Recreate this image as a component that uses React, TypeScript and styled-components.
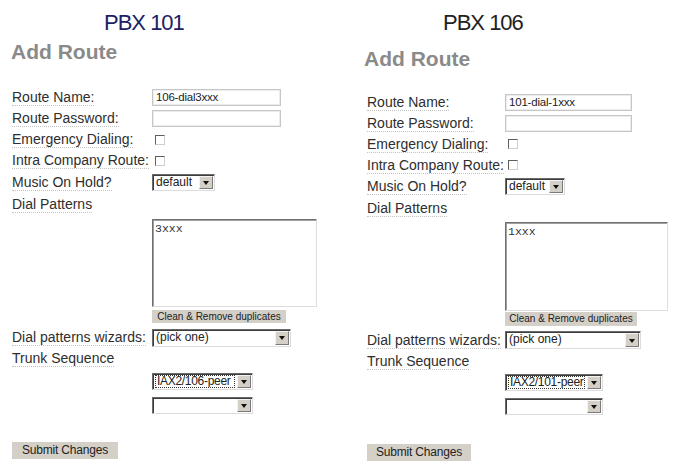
import React from 'react';
import styled, { createGlobalStyle } from 'styled-components';

const GlobalStyle = createGlobalStyle`
  html, body {
    margin: 0;
    padding: 0;
    background: #ffffff;
  }
  body {
    font-family: "Liberation Sans", Arial, sans-serif;
    color: #2a2a2a;
  }
`;

type PanelData = {
  title: string;
  titleColor: string;
  titleIndent: number;
  headIndent: number;
  headMargin: number;
  formMargin: number;
  labelWidth: number;
  routeName: string;
  pattern: string;
  trunk: string;
  inputWidth: number;
  musicWidth: number;
  areaWidth: number;
  areaHeight: number;
  areaGap: number;
  cleanWidth: number;
  cleanGap: number;
  cleanHeight: number;
  wizardWidth: number;
  wizardGap: number;
  trunkWidth: number;
  trunkGap: number;
  submitWidth: number;
  submitGap: number;
  width: number;
};

const panels: PanelData[] = [
  {
    title: 'PBX 101',
    titleColor: '#1c2163',
    titleIndent: 92,
    headIndent: -1,
    headMargin: 4,
    formMargin: 23,
    labelWidth: 140,
    routeName: '106-dial3xxx',
    pattern: '3xxx',
    trunk: 'IAX2/106-peer',
    inputWidth: 129,
    musicWidth: 63,
    areaWidth: 165,
    areaHeight: 88,
    areaGap: 3.5,
    cleanWidth: 134,
    cleanGap: 3,
    cleanHeight: 13,
    wizardWidth: 139,
    wizardGap: 4,
    trunkWidth: 101,
    trunkGap: 4,
    submitWidth: 106,
    submitGap: 28,
    width: 355,
  },
  {
    title: 'PBX 106',
    titleColor: '#222222',
    titleIndent: 76,
    headIndent: -3,
    headMargin: 10.5,
    formMargin: 21,
    labelWidth: 138,
    routeName: '101-dial-1xxx',
    pattern: '1xxx',
    trunk: 'IAX2/101-peer',
    inputWidth: 127,
    musicWidth: 60,
    areaWidth: 163,
    areaHeight: 89,
    areaGap: 2.5,
    cleanWidth: 132,
    cleanGap: 1,
    cleanHeight: 14,
    wizardWidth: 136,
    wizardGap: 3,
    trunkWidth: 98,
    trunkGap: 3,
    submitWidth: 104,
    submitGap: 29,
    width: 320,
  },
];

function App() {
  return (
    <>
      <GlobalStyle />
      <Page>
        {panels.map((p) => (
          <RoutePanel key={p.title} data={p} />
        ))}
      </Page>
    </>
  );
}

function RoutePanel({ data }: { data: PanelData }) {
  return (
    <Panel $width={data.width}>
      <Title $color={data.titleColor} $indent={data.titleIndent}>
        {data.title}
      </Title>
      <Heading $indent={data.headIndent} $gap={data.headMargin}>
        Add Route
      </Heading>

      <Form $gap={data.formMargin}>
        <Row $label={data.labelWidth}>
          <Label>Route Name:</Label>
          <TextBox $width={data.inputWidth}>{data.routeName}</TextBox>
        </Row>
        <Row $label={data.labelWidth}>
          <Label>Route Password:</Label>
          <TextBox $width={data.inputWidth} />
        </Row>
        <Row $label={data.labelWidth}>
          <Label>Emergency Dialing:</Label>
          <Check />
        </Row>
        <Row $label={data.labelWidth}>
          <Label>Intra Company Route:</Label>
          <Check />
        </Row>
        <Row $label={data.labelWidth} $height={22}>
          <Label>Music On Hold?</Label>
          <Select width={data.musicWidth} value="default" />
        </Row>
        <Row $label={data.labelWidth} $height={22}>
          <Label>Dial Patterns</Label>
          <span />
        </Row>

        <Indent $label={data.labelWidth} $gap={data.areaGap}>
          <PatternArea $width={data.areaWidth} $height={data.areaHeight}>
            {data.pattern}
          </PatternArea>
        </Indent>
        <Indent $label={data.labelWidth} $gap={data.cleanGap}>
          <SmallButton $width={data.cleanWidth} $height={data.cleanHeight}>
            Clean &amp; Remove duplicates
          </SmallButton>
        </Indent>

        <Row $label={data.labelWidth} $height={22} $gap={data.wizardGap}>
          <Label>Dial patterns wizards:</Label>
          <Select width={data.wizardWidth} height={18} value="(pick one)" />
        </Row>
        <Row $label={data.labelWidth} $height={20}>
          <Label>Trunk Sequence</Label>
          <span />
        </Row>

        <Indent $label={data.labelWidth} $gap={data.trunkGap}>
          <Select width={data.trunkWidth} value={data.trunk} focused />
        </Indent>
        <Indent $label={data.labelWidth} $gap={7}>
          <Select width={data.trunkWidth} value="" />
        </Indent>

        <SubmitButton $width={data.submitWidth} $gap={data.submitGap}>
          Submit Changes
        </SubmitButton>
      </Form>
    </Panel>
  );
}

function Select({
  width,
  height = 17,
  value,
  focused,
}: {
  width: number;
  height?: number;
  value: string;
  focused?: boolean;
}) {
  return (
    <SelectBox $width={width} $height={height}>
      <SelectValue $focused={!!focused}>{value}</SelectValue>
      <ArrowButton>
        <Arrow />
      </ArrowButton>
    </SelectBox>
  );
}

export default App;

const Page = styled.div`
  display: flex;
  width: 675px;
  height: 473px;
  overflow: hidden;
`;

const Panel = styled.div<{ $width: number }>`
  width: ${(p) => p.$width}px;
  flex: none;
  padding: 10px 0 0 12px;
  box-sizing: border-box;
  display: flex;
  flex-direction: column;
  align-items: flex-start;
`;

const Title = styled.div<{ $color: string; $indent: number }>`
  padding-left: ${(p) => p.$indent}px;
  font-size: 22px;
  line-height: 26px;
  letter-spacing: -1px;
  color: ${(p) => p.$color};
`;

const Heading = styled.div<{ $indent: number; $gap: number }>`
  margin: ${(p) => p.$gap}px 0 0 ${(p) => p.$indent}px;
  font-size: 21px;
  line-height: 24px;
  font-weight: bold;
  color: #8a8a8a;
`;

const Form = styled.div<{ $gap: number }>`
  margin-top: ${(p) => p.$gap}px;
  display: flex;
  flex-direction: column;
  align-items: flex-start;
`;

const Row = styled.div<{ $label: number; $height?: number; $gap?: number }>`
  display: grid;
  grid-template-columns: ${(p) => p.$label}px auto;
  align-items: center;
  height: ${(p) => p.$height ?? 21}px;
  margin-top: ${(p) => p.$gap ?? 0}px;
`;

const Indent = styled.div<{ $label: number; $gap: number }>`
  padding-left: ${(p) => p.$label}px;
  margin-top: ${(p) => p.$gap}px;
  display: flex;
`;

const Label = styled.span`
  justify-self: start;
  font-size: 14px;
  line-height: 16px;
  color: #2e2e2e;
  border-bottom: 1px dotted #c4c4c4;
  white-space: nowrap;
`;

const TextBox = styled.div<{ $width: number }>`
  width: ${(p) => p.$width}px;
  height: 17px;
  box-sizing: border-box;
  border: 1px solid #c6c6c6;
  box-shadow: inset 0 0 0 1px #ececec;
  padding: 0 3px;
  font-size: 11.5px;
  line-height: 15px;
  letter-spacing: -0.2px;
  color: #222;
  white-space: nowrap;
`;

const Check = styled.span`
  display: block;
  width: 10px;
  height: 10px;
  margin-left: 3px;
  box-sizing: border-box;
  border: 1px solid;
  border-color: #5e5e5e #cfcfcf #cfcfcf #5e5e5e;
  background: #fff;
`;

const SelectBox = styled.div<{ $width: number; $height: number }>`
  width: ${(p) => p.$width}px;
  height: ${(p) => p.$height}px;
  box-sizing: border-box;
  border: 1px solid;
  border-color: #6a6a6a #dcdcdc #dcdcdc #6a6a6a;
  box-shadow: inset 1px 1px 0 #3c3c3c;
  background: #fff;
  display: flex;
  align-items: stretch;
  padding: 1px 1px 1px 2px;
`;

const SelectValue = styled.span<{ $focused: boolean }>`
  flex: 1;
  min-width: 0;
  font-size: 12px;
  line-height: ${(p) => (p.$focused ? 11 : 13)}px;
  padding: 0 1px;
  margin-right: 2px;
  color: #222;
  white-space: nowrap;
  overflow: hidden;
  letter-spacing: ${(p) => (p.$focused ? '-0.3px' : '0')};
  border: ${(p) => (p.$focused ? '1px dotted #333' : 'none')};
`;

const ArrowButton = styled.span`
  flex: none;
  width: 14px;
  box-sizing: border-box;
  background: #d4d0c8;
  border: 1px solid;
  border-color: #f4f4f4 #7a7a7a #7a7a7a #f4f4f4;
  display: flex;
  align-items: center;
  justify-content: center;
`;

const Arrow = styled.span`
  width: 0;
  height: 0;
  margin-top: 1px;
  border-left: 3.5px solid transparent;
  border-right: 3.5px solid transparent;
  border-top: 4px solid #111;
`;

const PatternArea = styled.div<{ $width: number; $height: number }>`
  width: ${(p) => p.$width}px;
  height: ${(p) => p.$height}px;
  box-sizing: border-box;
  border: 1px solid;
  border-color: #707070 #dedede #dedede #707070;
  box-shadow: inset 1px 1px 0 #a0a0a0;
  padding: 2px 2px;
  font-family: "Liberation Mono", "Courier New", monospace;
  font-size: 11.5px;
  line-height: 14px;
  color: #333;
`;

const SmallButton = styled.div<{ $width: number; $height: number }>`
  width: ${(p) => p.$width}px;
  height: ${(p) => p.$height}px;
  background: #d4d0c8;
  font-size: 10px;
  line-height: ${(p) => p.$height}px;
  text-align: center;
  color: #222;
  white-space: nowrap;
`;

const SubmitButton = styled.div<{ $width: number; $gap: number }>`
  width: ${(p) => p.$width}px;
  height: 17px;
  margin-top: ${(p) => p.$gap}px;
  background: #d4d0c8;
  font-size: 12px;
  line-height: 17px;
  text-align: center;
  letter-spacing: -0.2px;
  color: #222;
  white-space: nowrap;
`;
